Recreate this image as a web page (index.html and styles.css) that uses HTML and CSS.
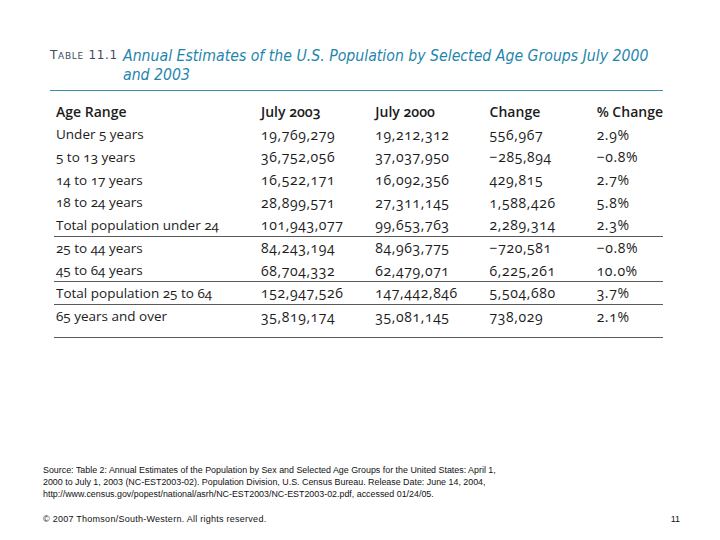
FILE: index.html
```html
<!DOCTYPE html>
<html>
<head>
<meta charset="utf-8">
<link rel="stylesheet" href="styles.css">
</head>
<body>
<div class="slide">
  <div class="head">
    <div class="label">T<span class="sc">ABLE</span> 11.1</div>
    <div class="title">Annual Estimates of the U.S. Population by Selected Age Groups July 2000<br>and 2003</div>
  </div>
  <table class="data">
    <thead>
      <tr><th class="c1">Age Range</th><th class="c2">July 2003</th><th class="c3">July 2000</th><th class="c4">Change</th><th class="c5">% Change</th></tr>
    </thead>
    <tbody>
      <tr><td>Under 5 years</td><td>19,769,279</td><td>19,212,312</td><td>556,967</td><td>2.9%</td></tr>
      <tr><td>5 to 13 years</td><td>36,752,056</td><td>37,037,950</td><td>&minus;285,894</td><td>&minus;0.8%</td></tr>
      <tr><td>14 to 17 years</td><td>16,522,171</td><td>16,092,356</td><td>429,815</td><td>2.7%</td></tr>
      <tr><td>18 to 24 years</td><td>28,899,571</td><td>27,311,145</td><td>1,588,426</td><td>5.8%</td></tr>
      <tr class="rule"><td>Total population under 24</td><td>101,943,077</td><td>99,653,763</td><td>2,289,314</td><td>2.3%</td></tr>
      <tr><td>25 to 44 years</td><td>84,243,194</td><td>84,963,775</td><td>&minus;720,581</td><td>&minus;0.8%</td></tr>
      <tr class="rule"><td>45 to 64 years</td><td>68,704,332</td><td>62,479,071</td><td>6,225,261</td><td>10.0%</td></tr>
      <tr class="rule"><td>Total population 25 to 64</td><td>152,947,526</td><td>147,442,846</td><td>5,504,680</td><td>3.7%</td></tr>
      <tr class="last"><td>65 years and over</td><td>35,819,174</td><td>35,081,145</td><td>738,029</td><td>2.1%</td></tr>
    </tbody>
  </table>
  <div class="source">Source: Table 2: Annual Estimates of the Population by Sex and Selected Age Groups for the United States: April 1,<br>2000 to July 1, 2003 (NC-EST2003-02). Population Division, U.S. Census Bureau. Release Date: June 14, 2004,<br>http://www.census.gov/popest/national/asrh/NC-EST2003/NC-EST2003-02.pdf, accessed 01/24/05.</div>
  <div class="foot">
    <span class="copy">© 2007 Thomson/South-Western. All rights reserved.</span>
    <span class="page">11</span>
  </div>
</div>
</body>
</html>
```
FILE: styles.css
```css
html, body {
  margin: 0;
  padding: 0;
  background: #ffffff;
}
.slide {
  width: 720px;
  height: 540px;
  box-sizing: border-box;
  padding-top: 46px;
  overflow: hidden;
  font-family: "Liberation Sans", Arial, sans-serif;
}
.head {
  display: flex;
  margin: 0 0 0 50px;
  width: 613px;
  padding-bottom: 6px;
  border-bottom: 1px solid #3b93a8;
}
.label {
  width: 73px;
  font-family: "DejaVu Sans", sans-serif;
  font-size: 12px;
  line-height: 19px;
  letter-spacing: 0.7px;
  color: #3d4b5c;
  flex: none;
}
.label .sc {
  font-size: 9px;
}
.title {
  font-family: "DejaVu Sans Condensed", "DejaVu Sans", sans-serif;
  font-style: italic;
  font-size: 15.7px;
  line-height: 19px;
  color: #1f86ad;
}
.data {
  margin: 9px 0 0 54px;
  width: 609px;
  border-collapse: collapse;
  font-family: "Open Sans", sans-serif;
  font-variant-numeric: oldstyle-nums;
  font-size: 14px;
  color: #1c1c1c;
}
.data th, .data td {
  padding: 0 0 0 2px;
  height: 22.75px;
  text-align: left;
  white-space: nowrap;
}
.data td {
  letter-spacing: 0.6px;
}
.data td:first-child {
  font-size: 13.5px;
  letter-spacing: 0;
}
.data th {
  font-weight: 600;
}
.c1 { width: 204px; }
.c2 { width: 113px; }
.c3 { width: 113px; }
.c4 { width: 106px; }
.c5 { width: 61px; }
.data tr.rule td {
  height: 21.75px;
  border-bottom: 1px solid #5a5a5a;
}
.data tr.last td {
  padding-bottom: 9px;
  border-bottom: 1px solid #5a5a5a;
}
.source {
  margin: 126px 0 0 43px;
  font-size: 8.9px;
  line-height: 12px;
  color: #111;
}
.foot {
  display: flex;
  justify-content: space-between;
  margin: 13px 0 0 43px;
  width: 637px;
  font-size: 9px;
  line-height: 12px;
  color: #111;
}
.copy {
  letter-spacing: 0.26px;
}
```
